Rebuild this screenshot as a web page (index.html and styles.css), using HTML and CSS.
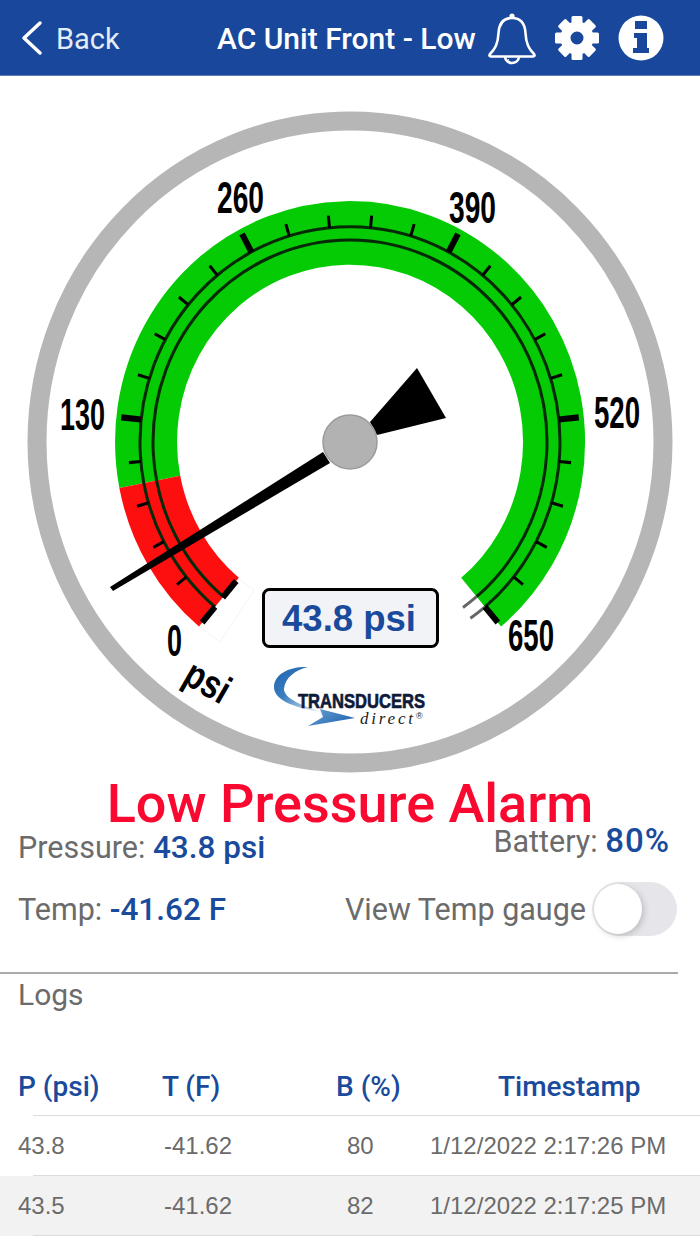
FILE: index.html
```html
<!DOCTYPE html>
<html lang="en">
<head>
  <meta charset="UTF-8" />
  <meta name="viewport" content="width=device-width, initial-scale=1.0"/>
  <title>AC Unit Front - Low</title>
  <link rel="stylesheet" href="styles.css">
</head>
<body>
  <header class="top-bar">
    <div class="back">
      <svg class="back-icon" width="24" height="36" viewBox="0 0 24 36"><path d="M20 3 L4 18 L20 33" /></svg>
      <span>Back</span>
    </div>
    <div class="page-title">AC Unit Front - Low</div>
    <div class="top-icons">
      <svg class="bell" width="50" height="56" viewBox="487 10 50 56">
        <circle cx="512" cy="16" r="2.6" />
        <path d="M512 18 C502 18 499 25 498.5 33 C498 44 495 49 490 54 Q488.5 56.5 491 56.5 H533 Q535.5 56.5 534 54 C529 49 526 44 525.5 33 C525 25 522 18 512 18 Z" />
        <path d="M505 57 C506 65 518 65 519 57" />
        <path class="thin" d="M508 59 C509 62 511 63 513 63" />
      </svg>
      <svg class="gear" width="46" height="46" viewBox="-23 -23 46 46">
        <circle r="11.5" />
        <g class="teeth">
          <rect x="-5.5" y="-22" width="11" height="10" rx="1.5" />
          <rect x="-5.5" y="-22" width="11" height="10" rx="1.5" transform="rotate(45)" />
          <rect x="-5.5" y="-22" width="11" height="10" rx="1.5" transform="rotate(90)" />
          <rect x="-5.5" y="-22" width="11" height="10" rx="1.5" transform="rotate(135)" />
          <rect x="-5.5" y="-22" width="11" height="10" rx="1.5" transform="rotate(180)" />
          <rect x="-5.5" y="-22" width="11" height="10" rx="1.5" transform="rotate(225)" />
          <rect x="-5.5" y="-22" width="11" height="10" rx="1.5" transform="rotate(270)" />
          <rect x="-5.5" y="-22" width="11" height="10" rx="1.5" transform="rotate(315)" />
        </g>
      </svg>
      <svg class="info" width="46" height="46" viewBox="618 15 46 46">
        <circle cx="641" cy="38" r="22.5" />
        <path class="info-i" d="M635 21 H647 V29 H635 Z M634 33 H647 V48 H649 V53 H633 V48 H637 V38 H634 Z" />
      </svg>
    </div>
  </header>

  <svg class="gauge" width="700" height="702" viewBox="0 76 700 702">
    <defs>
      <linearGradient id="swoosh" x1="0" y1="0" x2="0.8" y2="1">
        <stop offset="0" stop-color="#1d62ad" />
        <stop offset="0.5" stop-color="#3b7fbf" />
        <stop offset="1" stop-color="#d5e2ee" />
      </linearGradient>
      <linearGradient id="arrow" x1="0" y1="0" x2="1" y2="0.6">
        <stop offset="0" stop-color="#6ba3d3" />
        <stop offset="1" stop-color="#2569b2" />
      </linearGradient>
    </defs>

    <ellipse class="ring" cx="350" cy="442" rx="313" ry="321" />
    <polygon class="ghost" points="238,578 254,590 220,642 198,625" />

    <g transform="translate(350 442) scale(1 1.025)">
      <path class="band-green" d="M-200.2 38.9 A204 204 0 1 1 131.1 156.3" />
      <path class="band-red" d="M-131.1 156.3 A204 204 0 0 1 -200.2 38.9" />
      <path class="scale-line" d="M-135 160.9 A210 210 0 1 1 135 160.9" />
      <path class="scale-line" d="M-126.6 150.9 A197 197 0 1 1 126.6 150.9" />
      <path class="scale-end" d="M135 160.9 A210 210 0 0 1 120.4 172" />
      <path class="scale-end" d="M126.6 150.9 A197 197 0 0 1 113 161.4" />

      <line class="tick-major" y1="-198" y2="-177" transform="rotate(-140)" />
      <line class="tick-major" y1="-210" y2="-230" transform="rotate(-140)" />
      <line class="tick-minor" y1="-210" y2="-222" transform="rotate(-128.8)" />
      <line class="tick-minor" y1="-210" y2="-222" transform="rotate(-117.6)" />
      <line class="tick-minor" y1="-210" y2="-222" transform="rotate(-106.4)" />
      <line class="tick-minor" y1="-210" y2="-222" transform="rotate(-95.2)" />
      <line class="tick-major" y1="-210" y2="-230" transform="rotate(-84)" />
      <line class="tick-minor" y1="-210" y2="-222" transform="rotate(-72.8)" />
      <line class="tick-minor" y1="-210" y2="-222" transform="rotate(-61.6)" />
      <line class="tick-minor" y1="-210" y2="-222" transform="rotate(-50.4)" />
      <line class="tick-minor" y1="-210" y2="-222" transform="rotate(-39.2)" />
      <line class="tick-major" y1="-210" y2="-230" transform="rotate(-28)" />
      <line class="tick-minor" y1="-210" y2="-222" transform="rotate(-16.8)" />
      <line class="tick-minor" y1="-210" y2="-222" transform="rotate(-5.6)" />
      <line class="tick-minor" y1="-210" y2="-222" transform="rotate(5.6)" />
      <line class="tick-minor" y1="-210" y2="-222" transform="rotate(16.8)" />
      <line class="tick-major" y1="-210" y2="-230" transform="rotate(28)" />
      <line class="tick-minor" y1="-210" y2="-222" transform="rotate(39.2)" />
      <line class="tick-minor" y1="-210" y2="-222" transform="rotate(50.4)" />
      <line class="tick-minor" y1="-210" y2="-222" transform="rotate(61.6)" />
      <line class="tick-minor" y1="-210" y2="-222" transform="rotate(72.8)" />
      <line class="tick-major" y1="-210" y2="-230" transform="rotate(84)" />
      <line class="tick-minor" y1="-210" y2="-222" transform="rotate(95.2)" />
      <line class="tick-minor" y1="-210" y2="-222" transform="rotate(106.4)" />
      <line class="tick-minor" y1="-210" y2="-222" transform="rotate(117.6)" />
      <line class="tick-minor" y1="-210" y2="-222" transform="rotate(128.8)" />
      <line class="tick-major" y1="-210" y2="-230" transform="rotate(140)" />
    </g>

    <text class="scale-num" x="217" y="213" textLength="47" lengthAdjust="spacingAndGlyphs">260</text>
    <text class="scale-num" x="449" y="223" textLength="47" lengthAdjust="spacingAndGlyphs">390</text>
    <text class="scale-num" x="60" y="430" textLength="45" lengthAdjust="spacingAndGlyphs">130</text>
    <text class="scale-num" x="594" y="428" textLength="46" lengthAdjust="spacingAndGlyphs">520</text>
    <text class="scale-num" x="508" y="651" textLength="46" lengthAdjust="spacingAndGlyphs">650</text>
    <text class="scale-num" x="167" y="656" textLength="15" lengthAdjust="spacingAndGlyphs">0</text>
    <text class="unit" transform="translate(181 682) rotate(30)" textLength="46" lengthAdjust="spacingAndGlyphs">psi</text>

    <polygon class="needle" points="323,452 330,463 113,591 110,587" />
    <polygon class="needle" points="370,422 417,368 446,418 377,435" />
    <circle class="hub" cx="350" cy="442" r="27" />

    <rect class="readout-box" x="263.5" y="589.5" width="174" height="57" rx="6" />
    <text class="readout" x="349" y="631">43.8 psi</text>

    <path class="logo-swoosh" d="M308 667 C290 666 274 674 274 687 C274 699 290 707 322 712 C300 705 284 698 284 689 C285 677 296 670 308 667 Z" />
    <path class="logo-arrow" d="M320 709 L355 718 L308 726 L323 717 Z" />
    <text class="logo-name" x="298" y="708" textLength="127" lengthAdjust="spacingAndGlyphs">TRANSDUCERS</text>
    <text class="logo-sub" x="360" y="724" textLength="53">direct</text>
    <text class="logo-reg" x="416" y="719">®</text>
  </svg>

  <div class="alarm">Low Pressure Alarm</div>

  <section class="readings">
    <div class="reading-row first">
      <div class="reading">Pressure: <b>43.8 psi</b></div>
      <div class="reading battery">Battery: <b>80%</b></div>
    </div>
    <div class="reading-row second">
      <div class="reading">Temp: <b>-41.62 F</b></div>
      <div class="temp-toggle">
        <span class="reading">View Temp gauge</span>
        <div class="switch"><div class="knob"></div></div>
      </div>
    </div>
  </section>

  <hr class="divider">
  <div class="logs-title">Logs</div>

  <div class="log-table">
    <div class="log-row log-head">
      <div class="col-p">P (psi)</div>
      <div class="col-t">T (F)</div>
      <div class="col-b">B (%)</div>
      <div class="col-time">Timestamp</div>
    </div>
    <div class="log-row">
      <div class="col-p">43.8</div>
      <div class="col-t">-41.62</div>
      <div class="col-b">80</div>
      <div class="col-time">1/12/2022 2:17:26 PM</div>
    </div>
    <div class="log-row shaded">
      <div class="col-p">43.5</div>
      <div class="col-t">-41.62</div>
      <div class="col-b">82</div>
      <div class="col-time">1/12/2022 2:17:25 PM</div>
    </div>
  </div>
</body>
</html>
```

FILE: styles.css
```css
* { box-sizing: border-box; }
html, body {
  margin: 0;
  padding: 0;
  height: 100%;
  font-family: Roboto, "Liberation Sans", sans-serif;
  background-color: #fff;
  overflow: hidden;
}

/* top bar */
.top-bar {
  height: 76px;
  background-color: #18479b;
  border-bottom: 1px solid #5d7fba;
  color: #fff;
  display: flex;
  align-items: center;
  font-size: 30px;
}
.back {
  display: flex;
  align-items: center;
  padding-left: 20px;
  width: 217px;
  gap: 12px;
}
.back-icon { flex: none; }
.back-icon path {
  fill: none;
  stroke: #fff;
  stroke-width: 3.5;
  stroke-linecap: round;
  stroke-linejoin: round;
}
.back span {
  color: #e6ecf6;
  font-size: 29px;
  padding-top: 2px;
}
.page-title {
  font-weight: 500;
  width: 270px;
  white-space: nowrap;
  padding-top: 2px;
}
.top-icons {
  display: flex;
  align-items: center;
}
.bell circle { fill: #fff; }
.bell path {
  fill: none;
  stroke: #fff;
  stroke-width: 2.6;
  stroke-linejoin: round;
}
.bell .thin { stroke-width: 1; }
.gear { margin-left: 17px; }
.gear circle {
  fill: none;
  stroke: #fff;
  stroke-width: 10;
}
.gear .teeth { fill: #fff; }
.info { margin-left: 18px; }
.info circle { fill: #fff; }
.info-i { fill: #18479b; }

/* gauge */
.gauge { display: block; }
.ring {
  fill: none;
  stroke: #b6b6b6;
  stroke-width: 19;
}
.ghost {
  fill: none;
  stroke: #f4f4f4;
  stroke-width: 1;
}
.band-green, .band-red {
  fill: none;
  stroke-width: 62;
}
.band-green { stroke: #05cb05; }
.band-red { stroke: #fd0f0f; }
.scale-line {
  fill: none;
  stroke: #062a06;
  stroke-width: 3;
}
.scale-end {
  fill: none;
  stroke: #666;
  stroke-width: 3;
}
.tick-major { stroke: #000; stroke-width: 6; }
.tick-minor { stroke: #000; stroke-width: 3; }
.scale-num, .unit {
  font-family: "Liberation Sans Narrow", "Liberation Sans", sans-serif;
  font-weight: bold;
  fill: #000;
}
.scale-num { font-size: 44px; }
.unit { font-size: 40px; }
.needle { fill: #000; }
.hub {
  fill: #b2b2b2;
  stroke: #9b9b9b;
  stroke-width: 1.5;
}
.readout-box {
  fill: #f2f3f7;
  stroke: #000;
  stroke-width: 3;
}
.readout {
  font-family: "Liberation Sans", sans-serif;
  font-weight: bold;
  font-size: 36.5px;
  fill: #1a4a9c;
  text-anchor: middle;
}
.logo-swoosh { fill: url(#swoosh); }
.logo-arrow { fill: url(#arrow); }
.logo-name {
  font-family: "Liberation Sans", sans-serif;
  font-weight: bold;
  font-size: 21px;
  fill: #0f1a3a;
  stroke: #0f1a3a;
  stroke-width: 0.7;
}
.logo-sub {
  font-family: "Liberation Serif", serif;
  font-style: italic;
  font-size: 17px;
  fill: #222;
}
.logo-reg {
  font-family: "Liberation Sans", sans-serif;
  font-size: 9px;
  fill: #222;
}

/* alarm text */
.alarm {
  height: 51px;
  line-height: 51px;
  text-align: center;
  font-size: 54px;
  font-weight: 500;
  color: #f9082f;
  white-space: nowrap;
}

/* readings */
.readings { padding: 0 23px 0 18px; }
.reading-row {
  display: flex;
  justify-content: space-between;
}
.reading {
  font-size: 30.5px;
  color: #6b6b6b;
  white-space: nowrap;
}
.reading b {
  color: #1a4a9c;
  font-weight: 500;
  font-size: 31.5px;
}
.first { height: 53px; }
.battery { margin-top: -8px; margin-right: 7px; }
.battery b {
  font-size: 33px;
  letter-spacing: 1px;
}
.second { height: 54px; align-items: center; }
.temp-toggle {
  display: flex;
  align-items: center;
  gap: 6px;
}
.switch {
  width: 85px;
  height: 54px;
  border-radius: 27px;
  background-color: #e6e6ea;
  padding: 2px;
}
.knob {
  width: 48px;
  height: 50px;
  border-radius: 50%;
  background-color: #fff;
  box-shadow: 2px 2px 6px rgba(0, 0, 0, 0.18);
}

.divider {
  width: 678px;
  margin: 36px 0 0;
  border: none;
  border-top: 2px solid #ababab;
  height: 0;
}
.logs-title {
  padding: 3px 0 0 18px;
  font-size: 30px;
  color: #6b6b6b;
  height: 82px;
}

/* log table */
.log-row {
  display: grid;
  grid-template-columns: 144px 154px 114px 1fr;
  height: 60px;
  align-items: center;
  font-family: "Liberation Sans", sans-serif;
  font-size: 24px;
  color: #6b6b6b;
  position: relative;
  padding-left: 18px;
}
.log-row::after {
  content: "";
  position: absolute;
  left: 33px;
  right: 0;
  bottom: 0;
  height: 1px;
  background-color: #dcdcdf;
}
.log-head {
  font-family: Roboto, sans-serif;
  font-size: 28px;
  font-weight: 500;
  color: #1a4a9c;
}
.shaded { background-color: #f2f2f2; }
.col-time { white-space: nowrap; }
.col-b { padding-left: 31px; }
.log-head .col-b { padding-left: 20px; }
.log-head .col-time { padding-left: 68px; }
.log-row .col-t { padding-left: 2px; }
.log-head .col-t { padding-left: 0; }
```
